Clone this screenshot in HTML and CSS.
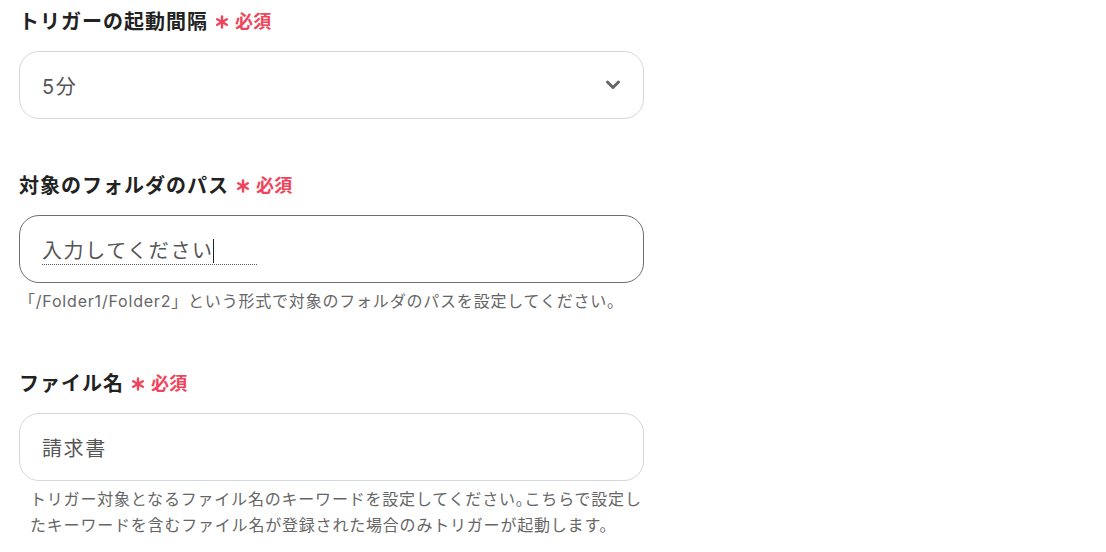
FILE: index.html
```html
<!DOCTYPE html>
<html lang="ja">
<head>
<meta charset="utf-8">
<link rel="stylesheet" href="styles.css">
</head>
<body>
<div class="form">
  <div class="field">
    <div class="label">トリガーの起動間隔<span class="req"><svg class="ast" width="14" height="14" viewBox="0 0 14 14"><g stroke="#f0445b" stroke-width="2.4" stroke-linecap="round"><path d="M7 1.5 V12.5"/><path d="M2.2 4.2 L11.8 9.8"/><path d="M2.2 9.8 L11.8 4.2"/></g></svg>必須</span></div>
    <div class="box select">
      <span class="value">5分</span>
      <svg class="chev" width="16" height="12" viewBox="0 0 16 12"><path d="M2.5 3 L8 8.5 L13.5 3" fill="none" stroke="#666" stroke-width="3" stroke-linecap="round" stroke-linejoin="round"/></svg>
    </div>
  </div>
  <div class="field">
    <div class="label">対象のフォルダのパス<span class="req"><svg class="ast" width="14" height="14" viewBox="0 0 14 14"><g stroke="#f0445b" stroke-width="2.4" stroke-linecap="round"><path d="M7 1.5 V12.5"/><path d="M2.2 4.2 L11.8 9.8"/><path d="M2.2 9.8 L11.8 4.2"/></g></svg>必須</span></div>
    <div class="box focus">
      <span class="placeholder">入力してください<span class="caret"></span><span class="pad"></span></span>
    </div>
    <div class="help">「/Folder1/Folder2」という形式で対象のフォルダのパスを設定してください。</div>
  </div>
  <div class="field">
    <div class="label">ファイル名<span class="req"><svg class="ast" width="14" height="14" viewBox="0 0 14 14"><g stroke="#f0445b" stroke-width="2.4" stroke-linecap="round"><path d="M7 1.5 V12.5"/><path d="M2.2 4.2 L11.8 9.8"/><path d="M2.2 9.8 L11.8 4.2"/></g></svg>必須</span></div>
    <div class="box">
      <span class="value">請求書</span>
    </div>
    <div class="help indent">トリガー対象となるファイル名のキーワードを設定してください。こちらで設定したキーワードを含むファイル名が登録された場合のみトリガーが起動します。</div>
  </div>
</div>
</body>
</html>
```
FILE: styles.css
```css
* { box-sizing: border-box; }
body {
  margin: 0;
  background: #fff;
  font-family: "Inter", "Noto Sans CJK JP", "Noto Sans", sans-serif;
  color: #222;
  letter-spacing: 0.05em;
}
.form {
  width: 625px;
  margin-left: 19px;
  padding-top: 8px;
  display: flex;
  flex-direction: column;
  gap: 53px;
}
.field { display: flex; flex-direction: column; }
.label {
  font-size: 20px;
  font-weight: 700;
  line-height: 28px;
  color: #222;
  letter-spacing: 0.05em;
  display: flex;
  align-items: center;
}
.req {
  color: #f0445b;
  font-size: 18px;
  font-weight: 700;
  margin-left: 7px;
  display: flex;
  align-items: center;
  letter-spacing: 0.02em;
}
.ast {
  margin-right: 6px;
}
.box {
  margin-top: 15px;
  height: 68px;
  border: 1px solid #d3d7de;
  border-radius: 20px;
  padding: 0 22px;
  display: flex;
  align-items: center;
  justify-content: space-between;
}
.box.focus { border-color: #6e6e6e; }
.value {
  font-size: 20px;
  color: #555;
  letter-spacing: 0.08em;
}
.placeholder {
  font-size: 20px;
  color: #555;
  letter-spacing: 0.08em;
  border-bottom: 1px dotted #555;
  margin-top: 4px;
  line-height: 26px;
  display: inline-flex;
  align-items: center;
}
.caret {
  display: inline-block;
  width: 1px;
  height: 24px;
  background: #222;
  margin-left: -1px;
}
.pad { display: inline-block; width: 43px; }
.help {
  margin-top: 5px;
  margin-bottom: 3px;
  font-size: 16px;
  line-height: 26px;
  color: #666;
}
.help.indent {
  padding-left: 11px;
  margin-right: -4px;
  font-feature-settings: "halt";
}
```
